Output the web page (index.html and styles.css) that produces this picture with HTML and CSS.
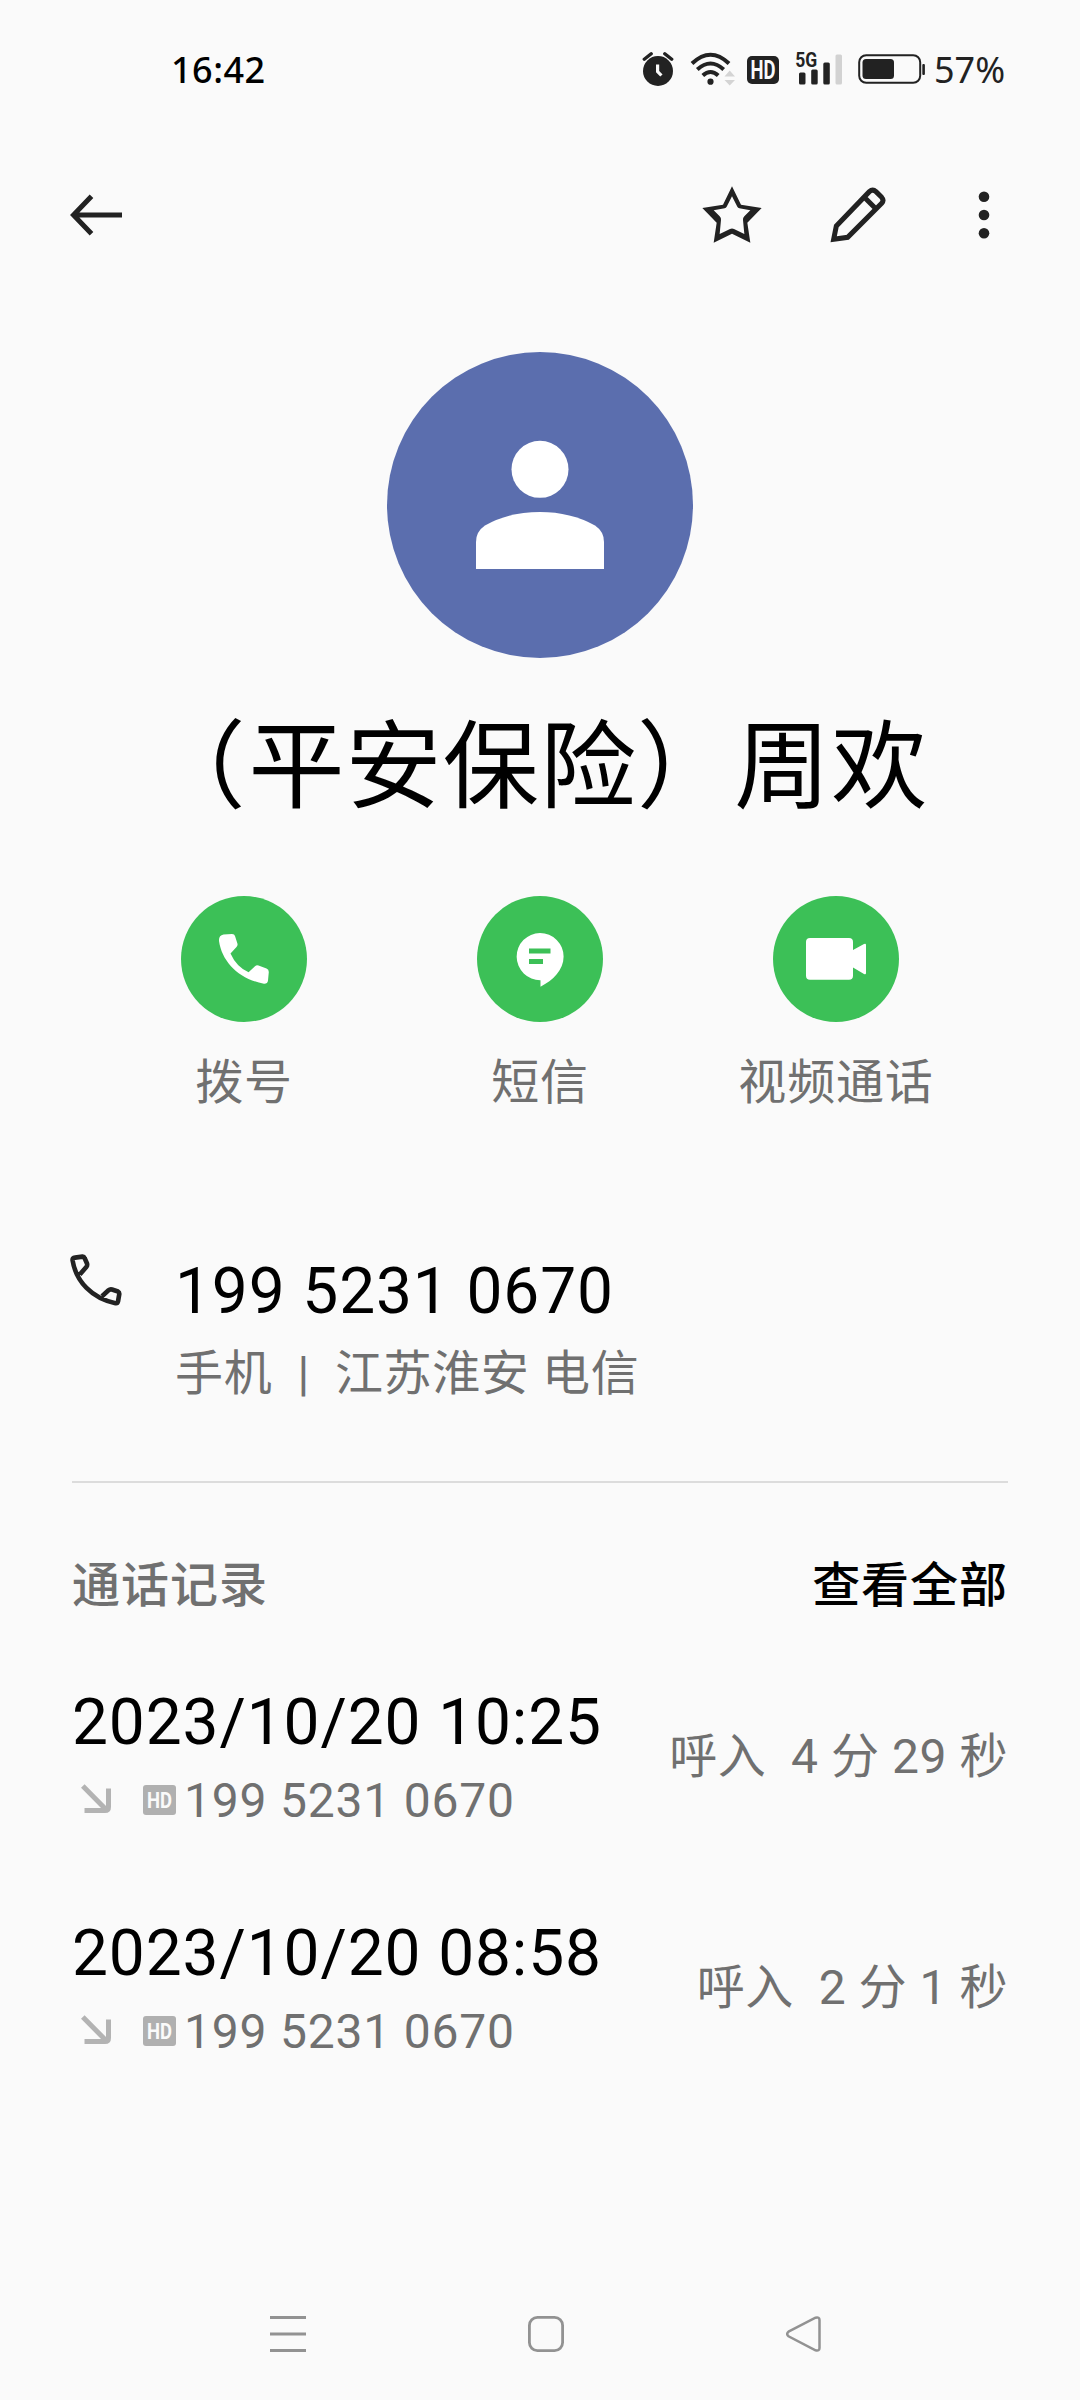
FILE: index.html
```html
<!DOCTYPE html>
<html lang="zh-CN">
<head>
<meta charset="utf-8">
<title>联系人</title>
<link rel="stylesheet" href="styles.css">
</head>
<body>
<div class="screen">
  <header class="status">
    <span class="clock">16:42</span>
    <div class="status-icons">
      <svg class="ic-alarm" width="32" height="36" viewBox="0 0 32 36">
        <circle cx="16" cy="20" r="15" fill="#222"/>
        <path d="M2.3 8.3L9.2 2.7M29.7 8.3L22.8 2.7" stroke="#222" stroke-width="3.4" stroke-linecap="round"/>
        <path d="M15.6 13.6V20.5L19.4 24.5" fill="none" stroke="#fafafa" stroke-width="3.2"/>
      </svg>
      <svg class="ic-wifi" width="46" height="36" viewBox="0 0 46 36">
        <g fill="none" stroke="#222" stroke-width="4">
          <path d="M2 12.5Q20.5 -5 39 12.5"/>
          <path d="M7.3 18.5Q20.5 6.5 33.7 18.5"/>
          <path d="M12.8 24.5Q20.5 17.5 28.2 24.5"/>
        </g>
        <circle cx="20.5" cy="30.7" r="3.1" fill="#222"/>
        <path d="M34.5 25.5L39.7 19.5L45 25.5ZM34.5 29L39.7 34.5L45 29Z" fill="#d4d4d4"/>
      </svg>
      <svg class="ic-hd" width="32" height="36" viewBox="0 -4 32 36">
        <rect width="32" height="28" rx="5" fill="#222"/>
        <text class="hd-text" x="16" y="22.8" text-anchor="middle" textLength="25" lengthAdjust="spacingAndGlyphs">HD</text>
      </svg>
      <svg class="ic-signal" width="48" height="42" viewBox="0 -8 48 42">
        <text class="net-text" x="0.3" y="14.6" textLength="22" lengthAdjust="spacingAndGlyphs">5G</text>
        <g fill="#222">
          <rect x="4" y="20.5" width="6.5" height="12" rx="1.5"/>
          <rect x="16.2" y="17.5" width="6.5" height="15" rx="1.5"/>
          <rect x="28.3" y="10.5" width="6.5" height="22" rx="1.5"/>
        </g>
        <rect x="40.5" y="2.5" width="6.5" height="30" rx="1.5" fill="#d2d2d2"/>
      </svg>
      <svg class="ic-battery" width="68" height="30" viewBox="0 0 68 30">
        <rect x="1.2" y="1.2" width="61" height="27.6" rx="7" fill="none" stroke="#222" stroke-width="2"/>
        <rect x="4.5" y="5" width="31.5" height="20" rx="3.5" fill="#222"/>
        <rect x="64.3" y="10" width="2.6" height="11" rx="1" fill="#222"/>
      </svg>
      <span class="battery-level">57%</span>
    </div>
  </header>

  <nav class="toolbar">
    <svg class="ic-back" width="54" height="42" viewBox="0 0 54 42">
      <path d="M54 21H6M23.5 2.2L5.5 21L23.5 39.8" fill="none" stroke="#222" stroke-width="5"/>
    </svg>
    <div class="tools">
      <svg width="60" height="58" viewBox="66 78 180 174">
        <path fill="#222" fill-rule="evenodd" d="M156 79L183 134L245 144L202 188L211 248L156 221L101 248L110 188L67 144L129 134ZM156 109L140 140Q138 144 134 145L101 151L119 169Q124 174 123 180L119 222L150 207Q156 204 162 207L193 222L189 180Q188 174 193 169L211 151L178 145Q174 144 172 140Z"/>
      </svg>
      <svg width="56" height="58" viewBox="449 78 168 174">
        <path fill="none" stroke="#222" stroke-width="15" d="M460 238L468 198L567 95Q577 86 587 95L604 112Q612 121 604 130L502 232ZM552 112L588 148"/>
      </svg>
      <svg width="12" height="48" viewBox="0 0 12 48">
        <g fill="#222"><circle cx="6" cy="5.7" r="5.3"/><circle cx="6" cy="24" r="5.3"/><circle cx="6" cy="42.3" r="5.3"/></g>
      </svg>
    </div>
  </nav>

  <main class="contact">
    <svg class="avatar" width="306" height="306" viewBox="0 0 306 306">
      <circle cx="153" cy="153" r="153" fill="#5b6eae"/>
      <circle cx="153" cy="117.3" r="28.5" fill="#fff"/>
      <path fill="#fff" d="M89 217V190Q89 179.500 98 173.500Q122 160 153 160Q184 160 208 173.500Q217 179.500 217 190V217Z"/>
    </svg>
    <h1 class="name"><span class="paren">（</span>平安保险）周欢</h1>

    <div class="actions">
      <div class="action">
        <svg width="126" height="126" viewBox="0 0 126 126">
          <circle cx="63" cy="63" r="63" fill="#3cc057"/>
          <path transform="translate(38 38)" fill="#fff" d="M4.500 .6L13 0Q15.500 0 16 2L18.400 9.500Q19 11.500 17.500 13L11.500 19.500Q17.500 33 29.600 38.300L36 32.200Q37.500 30.800 39.500 31.500L47.500 34.600Q49.800 35.500 49.800 38L49 46.500Q48.500 50 45 49.800C20 45 3 28 0 7Q-.3 1.500 4.500 .6Z"/>
        </svg>
        <span>拨号</span>
      </div>
      <div class="action">
        <svg width="126" height="126" viewBox="0 0 126 126">
          <circle cx="63" cy="63" r="63" fill="#3cc057"/>
          <path fill="#fff" d="M63 37A23.600 23.600 0 0 1 86.600 60.600C86.600 74 76 84.500 63.500 90.700V84.200A23.600 23.600 0 0 1 63 37Z"/>
          <path fill="#3cc057" d="M52 52.500H73.500V57.500H52ZM52 63H66V68H52Z"/>
        </svg>
        <span>短信</span>
      </div>
      <div class="action">
        <svg width="126" height="126" viewBox="0 0 126 126">
          <circle cx="63" cy="63" r="63" fill="#3cc057"/>
          <path fill="#fff" d="M37 42H76Q80 42 80 46V54L91 48Q93 47 93 49V77Q93 79 91 78L80 71.500V79.800Q80 83.800 76 83.800H37Q33 83.800 33 79.800V46Q33 42 37 42Z"/>
        </svg>
        <span>视频通话</span>
      </div>
    </div>

    <section class="number">
      <svg class="ic-phone" width="52" height="52" viewBox="0 0 52 52">
        <path fill="none" stroke="#222" stroke-width="4.600" stroke-linejoin="round" d="M5 3.600L12.500 2.600Q14 2.500 14.600 4L17 9.500Q17.600 11.500 16.300 13L9.800 20.500M32 42.300L38.500 36.300Q40 35 42 35.500L48 37.500Q49.400 38.200 49.300 40L48 47.500Q47.500 49.500 45.500 49.200C22 44.500 6 27.500 2.600 6.500Q2.300 4 5 3.600"/>
      </svg>
      <div class="number-body">
        <div class="big">199 5231 0670</div>
        <div class="small">手机  |  江苏淮安 电信</div>
      </div>
    </section>

    <section class="log">
      <div class="log-head"><span>通话记录</span><a class="all">查看全部</a></div>
      <div class="calls">
        <div class="call">
          <div>
            <div class="big">2023/10/20 10:25</div>
            <div class="meta">
              <svg class="ic-in" width="30" height="30" viewBox="0 0 30 30"><path d="M1.800 2L25 25.500M3.500 26.500H24Q27.500 26.500 27.500 23V4.500" fill="none" stroke="#b3b3b3" stroke-width="5"/></svg>
              <svg class="ic-hd-s" width="33" height="30" viewBox="0 0 33 30"><rect width="33" height="30" rx="3" fill="#b0b0b0"/><text class="hd-text hd-small" x="16.500" y="23" text-anchor="middle" textLength="25" lengthAdjust="spacingAndGlyphs">HD</text></svg>
              <span class="small digits">199 5231 0670</span>
            </div>
          </div>
          <span class="small">呼入  4 分 29 秒</span>
        </div>
        <div class="call">
          <div>
            <div class="big">2023/10/20 08:58</div>
            <div class="meta">
              <svg class="ic-in" width="30" height="30" viewBox="0 0 30 30"><path d="M1.800 2L25 25.500M3.500 26.500H24Q27.500 26.500 27.500 23V4.500" fill="none" stroke="#b3b3b3" stroke-width="5"/></svg>
              <svg class="ic-hd-s" width="33" height="30" viewBox="0 0 33 30"><rect width="33" height="30" rx="3" fill="#b0b0b0"/><text class="hd-text hd-small" x="16.500" y="23" text-anchor="middle" textLength="25" lengthAdjust="spacingAndGlyphs">HD</text></svg>
              <span class="small digits">199 5231 0670</span>
            </div>
          </div>
          <span class="small">呼入  2 分 1 秒</span>
        </div>
      </div>
    </section>
  </main>

  <footer class="navbar">
    <svg width="36" height="36" viewBox="0 0 36 36"><path d="M0 1.500H36M0 18H36M0 34.500H36" stroke="#929292" stroke-width="3"/></svg>
    <svg width="36" height="36" viewBox="0 0 36 36"><rect x="1.400" y="1.400" width="33.200" height="33.200" rx="8" fill="none" stroke="#929292" stroke-width="2.800"/></svg>
    <svg width="36" height="36" viewBox="0 0 36 36"><path d="M2.500 15.700L29.500 1.700Q33.500 .6 33.500 4V32Q33.500 35.400 29.500 34.300L2.500 20.300Q-.2 18 2.500 15.700Z" fill="none" stroke="#929292" stroke-width="2.500"/></svg>
  </footer>
</div>
</body>
</html>
```
FILE: styles.css
```css
* { box-sizing: border-box; }
body {
  margin: 0;
  background: #fafafa;
  color: #000;
  font-family: Roboto, "Noto Sans CJK SC", sans-serif;
}
svg { display: block; flex: none; }
.screen {
  width: 1080px;
  height: 2400px;
  display: flex;
  flex-direction: column;
}

.status {
  height: 138px;
  padding: 0 74px 0 171px;
  display: flex;
  align-items: center;
  justify-content: space-between;
  font: 500 36px/50px "Noto Sans", sans-serif;
}
.clock { padding-top: 2px; letter-spacing: 0.5px; }
.status-icons { display: flex; align-items: center; }
.ic-wifi { margin-left: 16px; }
.ic-hd { margin-left: 11px; margin-top: 2px; }
.ic-signal { margin-left: 16px; margin-top: -8px; }
.ic-battery { margin-left: 15px; }
.battery-level { margin-left: 8px; padding-top: 2px; width: 72px; color: #222; font-weight: 400; }
.hd-text { font: 700 25px Roboto, sans-serif; fill: #fafafa; }
.hd-small { font-size: 22px; }
.net-text { font: 700 20px Roboto, sans-serif; fill: #222; }

.toolbar {
  height: 154px;
  padding: 0 90px 0 68px;
  display: flex;
  align-items: center;
  justify-content: space-between;
}
.tools { display: flex; align-items: center; }
.tools svg + svg { margin-left: 68px; }
.tools svg:last-child { margin-left: 92px; }

.contact { display: flex; flex-direction: column; }
.avatar { margin: 60px auto 0; }
.name {
  margin: 53px 0 0;
  font-size: 96px;
  font-weight: 400;
  line-height: 112px;
  letter-spacing: 0.012em;
  text-align: center;
  white-space: nowrap;
}
.paren { margin-left: -2px; letter-spacing: 3px; }

.actions {
  margin: 73px 96px 0;
  display: grid;
  grid-template-columns: repeat(3, 1fr);
}
.action {
  display: flex;
  flex-direction: column;
  align-items: center;
  gap: 33px;
  font-size: 48px;
  line-height: 56px;
  letter-spacing: 0.018em;
  color: #707070;
}

.big { font-size: 64px; line-height: 76px; letter-spacing: 0.0138em; }
.small {
  font-size: 48px;
  line-height: 56px;
  letter-spacing: 0.011em;
  color: #707070;
  white-space: pre;
}
.number .small { letter-spacing: 0.0135em; }
.meta .digits { letter-spacing: 0.0165em; }

.number {
  margin: 141px 72px 0;
  padding-bottom: 79px;
  border-bottom: 2px solid #dcdcdc;
  display: flex;
}
.ic-phone { margin: 2px 53px 0 -2px; }
.number-body { display: flex; flex-direction: column; gap: 16px; padding-top: 2px; }

.log { margin: 75px 72px 0; }
.log-head {
  display: flex;
  justify-content: space-between;
  font-size: 48px;
  font-weight: 500;
  line-height: 56px;
  letter-spacing: 0.02em;
  color: #707070;
}
.all { color: #000; }
.calls { margin-top: 71px; display: flex; flex-direction: column; gap: 87px; }
.call { display: flex; align-items: center; justify-content: space-between; }
.meta { margin-top: 12px; padding-left: 9px; display: flex; align-items: center; }
.ic-in { margin-top: -4px; }
.ic-hd-s { margin: -2px 8px 0 32px; }

.navbar {
  height: 132px;
  margin-top: auto;
  padding: 0 258px 0 270px;
  display: flex;
  align-items: center;
  justify-content: space-between;
}
```
